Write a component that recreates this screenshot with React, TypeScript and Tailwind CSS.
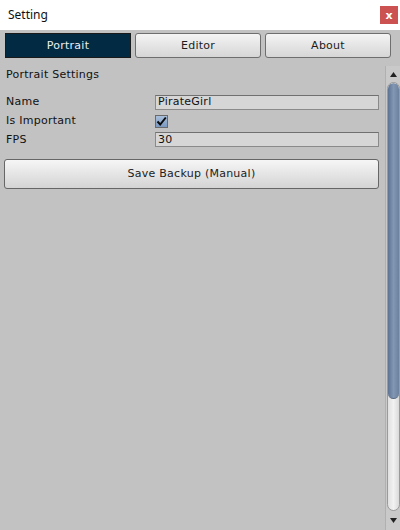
import React from 'react';

const tabs = ['Portrait', 'Editor', 'About'];

function Tab({ label, active }: { label: string; active: boolean }) {
  if (active) {
    return (
      <div className="flex h-[25px] w-[126px] items-center justify-center border border-[#1a1a1a] bg-[#022b43] pt-[2px] text-[#e8eef2]">
        {label}
      </div>
    );
  }
  return (
    <div className="flex h-[25px] w-[126px] items-center justify-center rounded-[3px] border border-[#6e6e6e] bg-gradient-to-b from-[#f4f4f4] to-[#d6d6d6] pt-[2px] text-[#1c1c1c]">
      {label}
    </div>
  );
}

function Field({ value }: { value: string }) {
  return (
    <div className="flex h-[15px] w-[224px] items-center border border-[#8a8a8a] border-t-[#707070] bg-[#d6d6d6] pl-[2px] text-[#111]">
      {value}
    </div>
  );
}

export default function App() {
  return (
    <div
      className="flex h-[530px] w-[400px] flex-col overflow-hidden bg-[#c2c2c2] text-[11px] tracking-[0.25px]"
      style={{ fontFamily: '"DejaVu Sans", Verdana, sans-serif' }}
    >
      {/* title bar */}
      <div className="flex h-[30px] items-center justify-between bg-white pl-[8px] pr-[2px] tracking-normal">
        <span className="text-[12px] text-[#111]" style={{ fontFamily: '"Noto Sans", "Open Sans", sans-serif' }}>
          Setting
        </span>
        <div className="flex h-[18px] w-[18px] items-center justify-center bg-[#cc5252] text-[11px] font-bold leading-none text-white">
          x
        </div>
      </div>

      {/* tabs */}
      <div className="mt-[3px] flex gap-[4px] pl-[5px]">
        {tabs.map((t) => (
          <Tab key={t} label={t} active={t === 'Portrait'} />
        ))}
      </div>

      <div className="flex flex-1 pt-[8px]">
        {/* content */}
        <div className="flex-1 pl-[4px] pr-[6px]">
          <div className="pl-[2px] pt-[2px] leading-[14px] text-[#111]">Portrait Settings</div>

          <div className="mt-[12px] flex flex-col gap-[3px]">
            <div className="flex items-center">
              <span className="w-[151px] pl-[2px] text-[#111]">Name</span>
              <Field value="PirateGirl" />
            </div>
            <div className="flex h-[15px] items-center">
              <span className="w-[151px] pl-[2px] text-[#111]">Is Important</span>
              <div className="flex h-[13px] w-[13px] items-center justify-center border border-[#6a6a6a] bg-gradient-to-b from-[#a9bfdc] to-[#7a98c0]">
                <svg width="11" height="11" viewBox="0 0 11 11">
                  <path d="M1.5 5.5 L4.2 8.5 L9.8 1.5" fill="none" stroke="#0a0a0a" strokeWidth="2" />
                </svg>
              </div>
            </div>
            <div className="flex items-center">
              <span className="w-[151px] pl-[2px] text-[#111]">FPS</span>
              <Field value="30" />
            </div>
          </div>

          <div className="mt-[11px] flex h-[30px] items-center justify-center rounded-[3px] border border-[#666] bg-gradient-to-b from-[#f6f6f6] to-[#d4d4d4] text-[#1c1c1c]">
            Save Backup (Manual)
          </div>
        </div>

        {/* scrollbar */}
        <div className="flex w-[15px] flex-col border-l border-[#b0b0b0] bg-[#c9c9c9]">
          <div className="flex h-[16px] items-center justify-center">
            <svg width="7" height="5" viewBox="0 0 7 5">
              <path d="M3.5 0 L7 5 L0 5 Z" fill="#222" />
            </svg>
          </div>
          <div className="mx-auto flex w-[13px] flex-1 flex-col overflow-hidden rounded-[7px] border border-[#9a9a9a] bg-gradient-to-r from-[#e0e0e0] via-[#f2f2f2] to-[#dadada]">
            <div className="h-[316px] rounded-[6px] border-b border-[#5a6a80] bg-gradient-to-r from-[#5d7392] via-[#8297b3] to-[#6c819e]" />
          </div>
          <div className="flex h-[19px] items-center justify-center">
            <svg width="7" height="5" viewBox="0 0 7 5">
              <path d="M0 0 L7 0 L3.5 5 Z" fill="#222" />
            </svg>
          </div>
        </div>
      </div>
    </div>
  );
}
